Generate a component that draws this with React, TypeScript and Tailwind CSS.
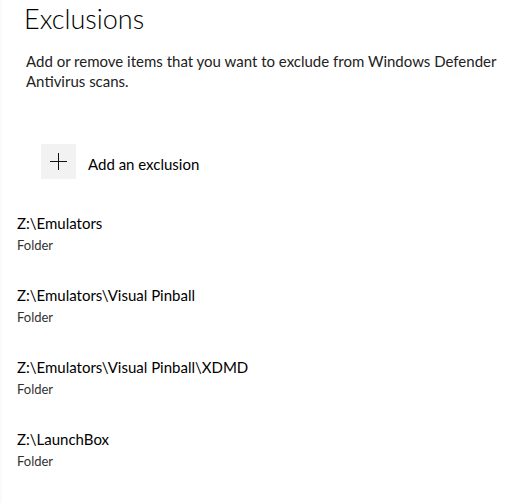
const items = [
  'Z:\\Emulators',
  'Z:\\Emulators\\Visual Pinball',
  'Z:\\Emulators\\Visual Pinball\\XDMD',
  'Z:\\LaunchBox',
]

export default function App() {
  return (
    <div className="w-[521px] h-[503px] bg-white border-l-2 border-[#fafafa] overflow-hidden text-black font-['Lato',sans-serif]">
      <h1 className="pl-[22px] text-[27px] font-light leading-[37px] text-black">
        Exclusions
      </h1>

      <p className="pl-[24px] mt-[14px] w-[500px] text-[15px] leading-[20px] text-[#222]">
        Add or remove items that you want to exclude from Windows Defender Antivirus scans.
      </p>

      {/* Add button */}
      <div className="flex items-center mt-[53px] ml-[39px]">
        <div className="w-[35px] h-[35px] bg-[#f2f2f2] flex items-center justify-center">
          <svg width="17" height="17" viewBox="0 0 17 17">
            <path d="M8.5 0v17M0 8.5h17" stroke="#111" strokeWidth="1" />
          </svg>
        </div>
        <span className="ml-[12px] pt-[4px] text-[15px] leading-[20px] text-black">Add an exclusion</span>
      </div>

      {/* Exclusions list */}
      <ul className="mt-[34px] pl-[15px]">
        {items.map((path) => (
          <li key={path} className="h-[72px]">
            <div className="text-[15px] leading-[20px] text-black">{path}</div>
            <div className="mt-[4px] text-[13px] leading-[16px] text-[#333]">Folder</div>
          </li>
        ))}
      </ul>
    </div>
  )
}
